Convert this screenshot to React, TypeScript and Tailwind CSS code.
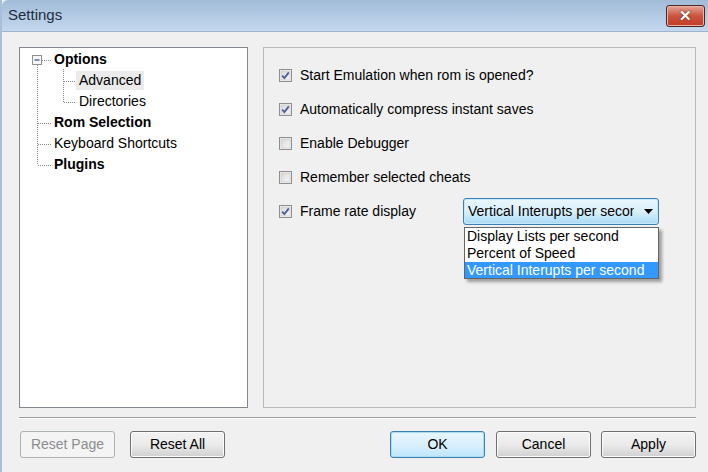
import clsx from 'clsx'

const font = { fontFamily: '"Liberation Sans", Arial, sans-serif' }

const Check = ({ checked }: { checked: boolean }) => (
  <svg width="13" height="13" viewBox="0 0 13 13" className="shrink-0">
    <defs>
      <linearGradient id="cb" x1="0" y1="0" x2="1" y2="1">
        <stop offset="0" stopColor="#d8d8d8" />
        <stop offset="1" stopColor="#f7f7f7" />
      </linearGradient>
    </defs>
    <rect x="0.5" y="0.5" width="12" height="12" fill="#f4f4f4" stroke="#8e8f8f" />
    <rect x="2" y="2" width="9" height="9" fill="url(#cb)" stroke="#c4c4c4" strokeWidth="0.6" />
    {checked && (
      <path d="M3.2 6.6 L5.4 9 L9.8 3.4" fill="none" stroke="#4a5e98" strokeWidth="1.8" />
    )}
  </svg>
)

const TreeLines = () => (
  <svg width="60" height="130" className="pointer-events-none absolute left-0 top-0">
    <rect x="12.5" y="7.5" width="9" height="9" fill="#f6f6f6" stroke="#919191" />
    <path d="M14.5 12 H19.5" stroke="#2d4f93" strokeWidth="1.2" />
    <g stroke="#8a8a8a" strokeDasharray="1 1" strokeWidth="1">
      <path d="M17.5 17 V117" />
      <path d="M22 12.5 H31" />
      <path d="M43.5 21 V54" />
      <path d="M44 33.5 H55" />
      <path d="M44 54.5 H55" />
      <path d="M18 75.5 H31" />
      <path d="M18 96.5 H31" />
      <path d="M18 117.5 H31" />
    </g>
  </svg>
)

const tree = [
  { label: 'Options', bold: true, indent: false },
  { label: 'Advanced', bold: false, indent: true, selected: true },
  { label: 'Directories', bold: false, indent: true },
  { label: 'Rom Selection', bold: true, indent: false },
  { label: 'Keyboard Shortcuts', bold: false, indent: false },
  { label: 'Plugins', bold: true, indent: false }
]

const options = [
  { label: 'Start Emulation when rom is opened?', checked: true },
  { label: 'Automatically compress instant saves', checked: true },
  { label: 'Enable Debugger', checked: false },
  { label: 'Remember selected cheats', checked: false }
]

const Btn = ({
  children,
  disabled,
  primary,
  className
}: {
  children: string
  disabled?: boolean
  primary?: boolean
  className?: string
}) => (
  <button
    className={clsx(
      'flex h-[27px] w-[95px] items-center justify-center rounded-[3px] border text-[14px]',
      disabled
        ? 'border-[#adb2b5] bg-[#f4f4f4] text-[#8d8d8d]'
        : primary
          ? 'border-[#3c7fb1] bg-gradient-to-b from-[#eaf6fd] via-[#d9f0fc] to-[#bee6fd] text-black shadow-[inset_0_0_0_1px_#a8dcf7]'
          : 'border-[#707070] bg-gradient-to-b from-[#f2f2f2] via-[#ebebeb] to-[#d0d0d0] text-black shadow-[inset_0_0_0_1px_#fcfcfc]',
      className
    )}
  >
    {children}
  </button>
)

export default function App() {
  return (
    <div
      className="flex h-[472px] w-[708px] flex-col overflow-hidden border-l-2 border-[#a9bfd7] bg-[#f0f0f0] text-black"
      style={font}
    >
      <div className="flex h-[32px] shrink-0 items-center justify-between rounded-tl-[6px] border-b border-[#9fb4cc] bg-gradient-to-b from-[#a2bcd8] to-[#c3d8ee] pl-[6px] pr-[3px]">
        <span className="text-[15px] text-[#1e2d3d]">Settings</span>
        <div className="flex h-[22px] w-[39px] items-center justify-center rounded-[3px] border border-[#4f2420] bg-gradient-to-b from-[#e3a497] via-[#c9543f] to-[#c33b22] shadow-[inset_0_0_0_1px_#eab4a8]">
          <span className="text-[15px] font-bold leading-none text-white [text-shadow:0_0_2px_#3a1410]">
            ✕
          </span>
        </div>
      </div>

      <div className="flex flex-1 flex-col pl-[17px] pr-[12px] pt-[15px]">
        <div className="flex h-[361px] gap-[15px]">
          <div className="relative w-[229px] border border-[#828790] bg-white pt-[1px]">
            <TreeLines />
            {tree.map((item) => (
              <div
                key={item.label}
                className={clsx(
                  'flex h-[21px] items-center text-[14px]',
                  item.indent ? 'pl-[56px]' : 'pl-[31px]',
                  item.bold && 'font-bold'
                )}
              >
                <span className={clsx('px-[3px] leading-[19px]', item.selected && 'bg-[#ebebeb]')}>
                  {item.label}
                </span>
              </div>
            ))}
          </div>

          <div className="relative flex-1 border border-[#b9b9b9] pl-[15px] pt-[10px]">
            {options.map((o) => (
              <div key={o.label} className="flex h-[34px] items-center gap-[8px] text-[14px]">
                <Check checked={o.checked} />
                <span>{o.label}</span>
              </div>
            ))}
            <div className="flex h-[34px] items-center text-[14px]">
              <div className="flex w-[184px] items-center gap-[8px]">
                <Check checked />
                <span>Frame rate display</span>
              </div>
              <div className="relative">
                <div className="flex h-[27px] w-[196px] items-center justify-between rounded-[3px] border border-[#3c7fb1] bg-gradient-to-b from-[#eaf6fd] via-[#d9f0fc] to-[#a7d9f5] pl-[4px] pr-[5px] shadow-[inset_0_0_0_1px_#c6e8fa]">
                  <span className="w-[166px] overflow-hidden whitespace-nowrap">
                    Vertical Interupts per second
                  </span>
                  <svg width="9" height="5" viewBox="0 0 9 5">
                    <path d="M0 0 H9 L4.5 5 Z" fill="#000" />
                  </svg>
                </div>
                <div className="absolute left-[1px] top-[29px] w-[195px] border border-[#646464] bg-white shadow-[3px_3px_3px_rgba(0,0,0,0.35)]">
                  {['Display Lists per second', 'Percent of Speed'].map((t) => (
                    <div key={t} className="flex h-[17px] items-center pl-[2px] leading-none">
                      {t}
                    </div>
                  ))}
                  <div className="flex h-[16px] items-center bg-[#3399ff] pl-[2px] leading-none text-white">
                    Vertical Interupts per second
                  </div>
                </div>
              </div>
            </div>
          </div>
        </div>

        <div className="mt-[9px] h-[2px] border-t border-b border-t-[#a0a0a0] border-b-white" />

        <div className="mt-[12px] flex items-center">
          <Btn disabled className="ml-[1px]">
            Reset Page
          </Btn>
          <Btn className="ml-[15px]">Reset All</Btn>
          <div className="flex-1" />
          <Btn primary>OK</Btn>
          <Btn className="ml-[11px]">Cancel</Btn>
          <Btn className="ml-[10px]">Apply</Btn>
        </div>
      </div>
    </div>
  )
}
